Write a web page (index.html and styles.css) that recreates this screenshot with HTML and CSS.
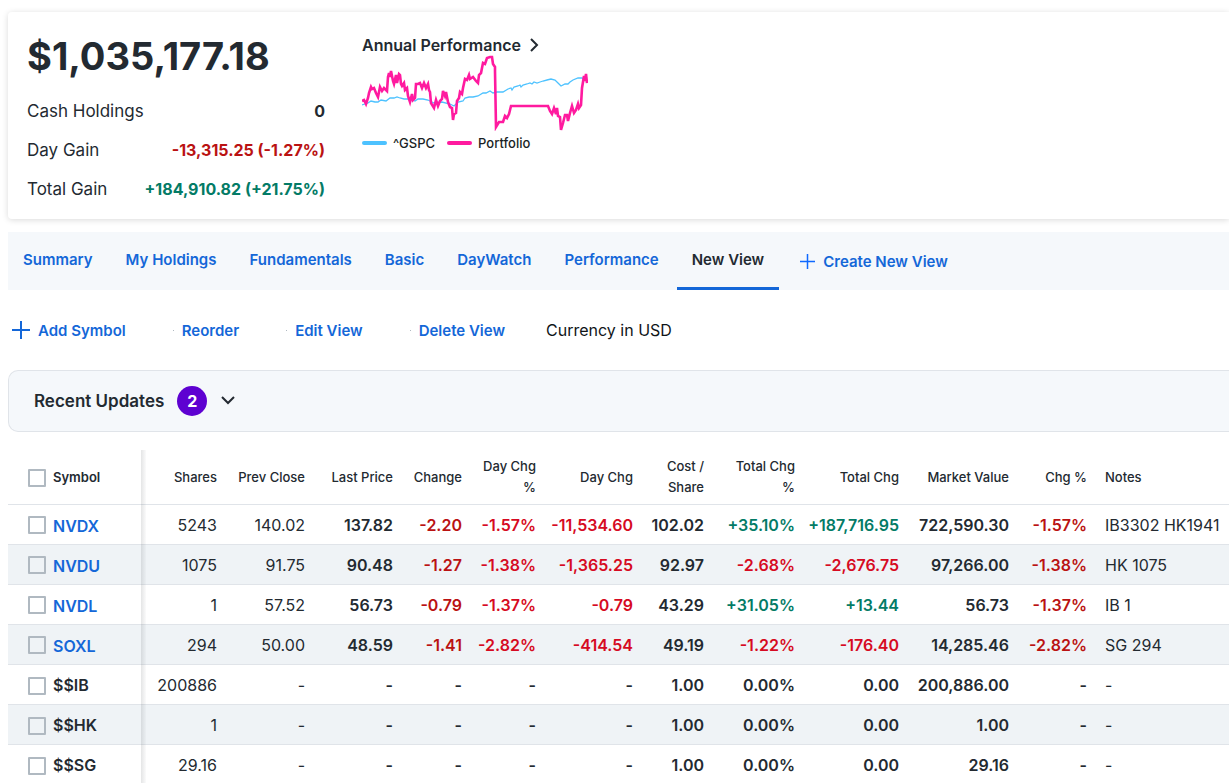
FILE: index.html
```html
<!DOCTYPE html>
<html lang="en">
<head>
  <meta charset="UTF-8">
  <title>Portfolio</title>
  <link rel="stylesheet" href="styles.css">
</head>
<body>
  <section class="card">
    <div class="totals">
      <h1 class="balance">$1,035,177.18</h1>
      <dl class="gains">
        <div class="gain"><dt>Cash Holdings</dt><dd>0</dd></div>
        <div class="gain"><dt>Day Gain</dt><dd class="down">-13,315.25 (-1.27%)</dd></div>
        <div class="gain"><dt>Total Gain</dt><dd class="up">+184,910.82 (+21.75%)</dd></div>
      </dl>
    </div>
    <div class="performance">
      <a href="#" class="perf-title">Annual Performance
        <svg width="10" height="14" viewBox="0 0 10 14"><path d="M2 1l6 6-6 6" fill="none" stroke="#232a31" stroke-width="2"/></svg>
      </a>
      <svg class="chart" width="226" height="76" viewBox="0 0 226 76" fill="none">
        <polyline stroke="#4dc2ff" stroke-width="1.3" points="0,50 3,49 6,48 9,46 13,47 16,47 19,45 24,46 28,43 32,43 35,42 38,43 42,44 48,44 53,46 56,44 61,44 66,45 72,48 80,47 88,49 92,51 96,47 101,46 103,43 107,42 111,42 116,41 121,38 124,38 128,36 131,38 135,37 141,37 146,34 149,33 150,35 152,32 156,31 158,30 159,32 161,30 165,29 168,28 170,29 172,27 175,28 178,27 181,26 185,25 189,24 193,25 196,28 199,31 203,29 206,29 208,27 211,25 216,23 220,23 222,24 225,22"/>
        <polyline stroke="#ff1a9f" stroke-width="2.6" points="0,46 2,45 4,49 6,43 7,38 9,32 10,34 12,33 14,38 16,42 17,37 18,32 20,36 22,33 25,36 26,22 27,18 28,22 29,16 31,26 32,29 34,20 35,28 37,19 38,20 39,29 40,31 42,28 43,35 45,33 46,41 48,47 50,39 51,45 53,43 54,29 56,29 58,28 60,33 62,28 64,33 66,29 67,35 68,37 69,48 72,53 74,45 76,51 78,46 80,44 81,36 83,41 84,37 86,47 88,52 90,53 91,65 92,59 94,58 95,46 97,43 98,37 100,39 101,33 103,24 105,25 107,20 108,24 111,22 114,26 116,28 117,20 119,18 121,8 123,9 125,3 128,2 130,2 131,9 133,12 133,16 134,72 137,67 141,67 143,61 145,63 147,59 149,51 186,51 188,56 190,59 192,53 194,59 195,53 196,61 198,62 199,75 201,68 203,60 205,60 206,66 208,58 210,51 212,58 214,55 216,49 217,53 219,50 220,33 222,21 223,26 224,19 225,28"/>
      </svg>
      <div class="legend">
        <span class="key gspc">^GSPC</span>
        <span class="key mine">Portfolio</span>
      </div>
    </div>
  </section>

  <nav class="tabs">
    <a href="#">Summary</a>
    <a href="#">My Holdings</a>
    <a href="#">Fundamentals</a>
    <a href="#">Basic</a>
    <a href="#">DayWatch</a>
    <a href="#">Performance</a>
    <a href="#" class="on">New View</a>
    <button type="button" class="create">
      <svg width="15" height="15" viewBox="0 0 15 15"><path d="M7.500 0v15M0 7.500h15" stroke="#0f69ff" stroke-width="1.500"/></svg>
      Create New View
    </button>
  </nav>

  <div class="toolbar">
    <button type="button" class="tool add">
      <svg width="18" height="18" viewBox="0 0 18 18"><path d="M9 0v18M0 9h18" stroke="#1467d8" stroke-width="2"/></svg>
      Add Symbol
    </button>
    <button type="button" class="tool reorder">Reorder</button>
    <button type="button" class="tool edit">Edit View</button>
    <button type="button" class="tool delete">Delete View</button>
    <span class="currency">Currency in USD</span>
  </div>

  <button type="button" class="updates">
    Recent Updates
    <span class="count">2</span>
    <svg width="16" height="10" viewBox="0 0 16 10"><path d="M2 1l6 6 6-6" fill="none" stroke="#232a31" stroke-width="2"/></svg>
  </button>

  <table class="holdings">
    <colgroup>
      <col class="c-symbol"><col class="c-shares"><col class="c-price"><col class="c-price"><col class="c-change"><col class="c-daypct"><col class="c-day"><col class="c-cost"><col class="c-totpct"><col class="c-total"><col class="c-market"><col class="c-chg"><col>
    </colgroup>
    <thead>
      <tr>
        <th class="symbol"><label><input type="checkbox">Symbol</label></th>
        <th>Shares</th>
        <th>Prev Close</th>
        <th>Last Price</th>
        <th>Change</th>
        <th>Day Chg<br>%</th>
        <th>Day Chg</th>
        <th>Cost /<br>Share</th>
        <th>Total Chg<br>%</th>
        <th>Total Chg</th>
        <th>Market Value</th>
        <th>Chg %</th>
        <th class="notes">Notes</th>
      </tr>
    </thead>
    <tbody>
      <tr>
        <td class="symbol"><input type="checkbox" aria-label="NVDX"><a href="#">NVDX</a></td>
        <td>5243</td><td>140.02</td><td class="b">137.82</td>
        <td class="b down">-2.20</td><td class="b loss">-1.57%</td><td class="b loss">-11,534.60</td>
        <td class="b">102.02</td><td class="b up">+35.10%</td><td class="b up">+187,716.95</td>
        <td class="b">722,590.30</td><td class="b down">-1.57%</td><td class="notes">IB3302 HK1941</td>
      </tr>
      <tr>
        <td class="symbol"><input type="checkbox" aria-label="NVDU"><a href="#">NVDU</a></td>
        <td>1075</td><td>91.75</td><td class="b">90.48</td>
        <td class="b down">-1.27</td><td class="b loss">-1.38%</td><td class="b loss">-1,365.25</td>
        <td class="b">92.97</td><td class="b loss">-2.68%</td><td class="b loss">-2,676.75</td>
        <td class="b">97,266.00</td><td class="b down">-1.38%</td><td class="notes">HK 1075</td>
      </tr>
      <tr>
        <td class="symbol"><input type="checkbox" aria-label="NVDL"><a href="#">NVDL</a></td>
        <td>1</td><td>57.52</td><td class="b">56.73</td>
        <td class="b down">-0.79</td><td class="b loss">-1.37%</td><td class="b loss">-0.79</td>
        <td class="b">43.29</td><td class="b up">+31.05%</td><td class="b up">+13.44</td>
        <td class="b">56.73</td><td class="b down">-1.37%</td><td class="notes">IB 1</td>
      </tr>
      <tr>
        <td class="symbol"><input type="checkbox" aria-label="SOXL"><a href="#">SOXL</a></td>
        <td>294</td><td>50.00</td><td class="b">48.59</td>
        <td class="b down">-1.41</td><td class="b loss">-2.82%</td><td class="b loss">-414.54</td>
        <td class="b">49.19</td><td class="b loss">-1.22%</td><td class="b loss">-176.40</td>
        <td class="b">14,285.46</td><td class="b down">-2.82%</td><td class="notes">SG 294</td>
      </tr>
      <tr>
        <td class="symbol"><label><input type="checkbox">$$IB</label></td>
        <td>200886</td><td>-</td><td class="b">-</td>
        <td class="b">-</td><td class="b">-</td><td class="b">-</td>
        <td class="b">1.00</td><td class="b">0.00%</td><td class="b">0.00</td>
        <td class="b">200,886.00</td><td class="b">-</td><td class="notes">-</td>
      </tr>
      <tr>
        <td class="symbol"><label><input type="checkbox">$$HK</label></td>
        <td>1</td><td>-</td><td class="b">-</td>
        <td class="b">-</td><td class="b">-</td><td class="b">-</td>
        <td class="b">1.00</td><td class="b">0.00%</td><td class="b">0.00</td>
        <td class="b">1.00</td><td class="b">-</td><td class="notes">-</td>
      </tr>
      <tr>
        <td class="symbol"><label><input type="checkbox">$$SG</label></td>
        <td>29.16</td><td>-</td><td class="b">-</td>
        <td class="b">-</td><td class="b">-</td><td class="b">-</td>
        <td class="b">1.00</td><td class="b">0.00%</td><td class="b">0.00</td>
        <td class="b">29.16</td><td class="b">-</td><td class="notes">-</td>
      </tr>
    </tbody>
  </table>
</body>
</html>
```
FILE: styles.css
```css
* {
  margin: 0;
  padding: 0;
  box-sizing: border-box;
}
html {
  overflow: hidden;
}
body {
  padding: 12px 0 0 8px;
  font-family: Inter, "Liberation Sans", sans-serif;
  font-size: 16px;
  color: #232a31;
  background: #fff;
}
a {
  color: #1467d8;
  text-decoration: none;
}
button {
  border: 0;
  background: none;
  font: inherit;
  color: inherit;
  cursor: pointer;
}
.up {
  color: #037b66;
}
.down {
  color: #ba1212;
}
.loss {
  color: #d60a22;
}

/* summary card */
.card {
  display: flex;
  gap: 37px;
  height: 207px;
  padding: 20px 19px 0;
  border-radius: 4px 0 0 4px;
  box-shadow: 0 1px 6px rgba(0,0,0,0.15);
}
.totals {
  width: 298px;
}
.balance {
  font-size: 38px;
  line-height: 48px;
  font-weight: 700;
}
.gains {
  margin-top: 11px;
}
.gain {
  display: flex;
  justify-content: space-between;
  align-items: center;
  height: 39px;
}
.gain dt {
  font-size: 17px;
}
.gain dd {
  font-size: 16px;
  font-weight: 700;
}
.performance {
  display: flex;
  flex-direction: column;
  align-items: flex-start;
}
.perf-title {
  display: flex;
  align-items: center;
  gap: 8px;
  height: 20px;
  margin-top: 3px;
  font-size: 16px;
  font-weight: 600;
  color: #232a31;
}
.chart {
  display: block;
}
.legend {
  display: flex;
  gap: 12px;
  margin-top: 2px;
  font-size: 13px;
  line-height: 20px;
  color: #1a1f26;
  font-weight: 500;
}
.key {
  display: flex;
  align-items: center;
  gap: 6px;
}
.key::before {
  content: "";
  width: 25px;
  height: 4px;
  border-radius: 2px;
  background: #4dc2ff;
}
.mine::before {
  background: #ff1a9f;
}

/* view tabs */
.tabs {
  display: flex;
  gap: 3px;
  height: 58px;
  margin-top: 13px;
  background: #f5f8fb;
}
.tabs a {
  padding: 0 15px;
  font-size: 15px;
  line-height: 55px;
  font-weight: 600;
}
.tabs .on {
  color: #232a31;
  border-bottom: 3px solid #1467d8;
}
.create {
  display: flex;
  align-items: center;
  gap: 8px;
  padding: 0 18px;
  font-size: 15px;
  font-weight: 600;
  color: #1467d8;
}

.toolbar {
  display: flex;
  align-items: center;
  height: 80px;
  padding-left: 4px;
}
.tool {
  display: flex;
  align-items: center;
  gap: 8px;
  margin-right: 47px;
  font-size: 15px;
  font-weight: 600;
  color: #1467d8;
}
.reorder::before,
.edit::before,
.delete::before {
  content: "";
  width: 1px;
  height: 1px;
  background: #b0b9c1;
}
.delete {
  margin-right: 41px;
}
.currency {
  color: #101518;
}

.updates {
  display: flex;
  align-items: center;
  gap: 13px;
  width: 100%;
  height: 62px;
  padding-left: 25px;
  border: 1px solid #e0e4e9;
  border-right: 0;
  border-radius: 10px 0 0 10px;
  background: #f5f8fb;
  font-size: 17px;
  font-weight: 600;
}
.count {
  width: 30px;
  height: 30px;
  border-radius: 50%;
  background: #5e01d1;
  color: #fff;
  font-size: 16px;
  font-weight: 700;
  line-height: 30px;
  text-align: center;
}

/* holdings table */
.holdings {
  width: 100%;
  margin-top: 18px;
  table-layout: fixed;
  border-collapse: separate;
  border-spacing: 0;
}
.c-symbol { width: 134px; }
.c-shares { width: 84px; }
.c-price { width: 88px; }
.c-change { width: 69px; }
.c-daypct { width: 74px; }
.c-day { width: 97px; }
.c-cost { width: 71px; }
.c-totpct { width: 91px; }
.c-total { width: 104px; }
.c-market { width: 110px; }
.c-chg { width: 78px; }
.holdings th {
  height: 55px;
  padding: 0 9px 0 0;
  border-bottom: 1px solid #e0e4e9;
  font-size: 13px;
  line-height: 21px;
  font-weight: 500;
  text-align: right;
  white-space: nowrap;
}
.holdings td {
  height: 40px;
  padding: 0 9px 0 0;
  border-bottom: 1px solid #e0e4e9;
  text-align: right;
  white-space: nowrap;
}
.holdings .b {
  font-weight: 600;
}
.holdings tbody tr:nth-child(even) {
  background: #eff3f6;
}
.holdings .notes {
  padding: 0 0 0 9px;
  text-align: left;
}
.holdings .symbol {
  position: relative;
  padding-left: 20px;
  text-align: left;
  font-weight: 600;
}
.symbol::after {
  content: "";
  position: absolute;
  top: 0;
  right: -4px;
  bottom: -1px;
  width: 5px;
  background: linear-gradient(to right, rgba(35,42,49,0.12), rgba(35,42,49,0.02));
}
.symbol input {
  appearance: none;
  width: 18px;
  height: 18px;
  margin-right: 7px;
  border: 2px solid #b0b9c1;
  border-radius: 1px;
  vertical-align: middle;
}
.symbol a,
.symbol label {
  vertical-align: middle;
}
```
